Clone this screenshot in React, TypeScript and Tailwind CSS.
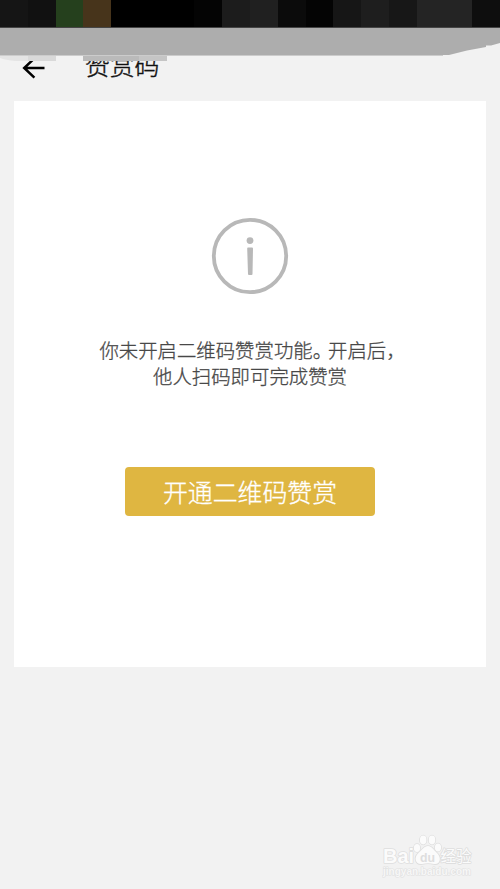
import React from 'react';

const mosaic = [
  'bg-[#151515]', 'bg-[#111111]', 'bg-[#25401d]', 'bg-[#47341b]', 'bg-black', 'bg-black',
  'bg-black', 'bg-[#040404]', 'bg-[#1c1c1c]', 'bg-[#202020]', 'bg-[#0b0b0b]', 'bg-[#040404]',
  'bg-[#161616]', 'bg-[#1e1e1e]', 'bg-[#171717]', 'bg-[#242424]', 'bg-[#242424]', 'bg-[#0e0e0e]',
];

function StatusBar() {
  return (
    <div className="relative z-10 h-[61px] w-full">
      <div className="flex h-7 border-b border-[#454545]">
        {mosaic.map((color, i) => (
          <div key={i} className={`flex-1 ${color}`} />
        ))}
      </div>
      {/* Smudged strip with the torn right corner */}
      <svg className="block" width="500" height="33" viewBox="0 0 500 33">
        <path d="M0 27H500V33H0Z" fill="#f2f2f2" />
        <path d="M0 28H56V33H16Q5 32 0 30Z" fill="#e4e4e4" />
        <path d="M28 28H56V33H28Z" fill="#d9d9d9" />
        <path d="M83 28H139V33H83Z" fill="#bababa" />
        <path d="M139 28H167V33H139Z" fill="#c5c5c5" />
        <path d="M0 27H443V28H0Z" fill="#cccccc" />
        <path d="M0 0H500V15L491 17.5H486V19L467 22.5L449 27H0Z" fill="#adadad" />
      </svg>
    </div>
  );
}

function Header() {
  return (
    <header className="-mt-[8px] flex h-12 items-start pl-[22px]">
      <svg className="mt-[3px]" width="24" height="24" viewBox="0 0 24 24" fill="none" stroke="#000" strokeWidth="2.5">
        <path d="M11.8 2.8L2.2 12L12.4 21.6M1.5 12H22.5" />
      </svg>
      <h1 className="-mt-[7px] ml-[39px] text-[24.8px] font-light leading-9 text-[#111] [-webkit-text-stroke:0.4px_#111]">
        赞赏码
      </h1>
    </header>
  );
}

function InfoIcon() {
  return (
    <svg width="78" height="78" viewBox="0 0 78 78" fill="none">
      <circle cx="39" cy="39" r="36.2" stroke="#b8b8b8" strokeWidth="3.8" />
      <circle cx="39" cy="23.6" r="3.4" fill="#b8b8b8" />
      <path d="M37 30.5H41Q42 30.5 42 31.5L41.5 57Q41.5 58 40.5 58H38Q37 58 37 57L36.2 31.5Q36.2 30.5 37 30.5Z" fill="#b8b8b8" />
    </svg>
  );
}

function Watermark() {
  return (
    <svg
      className="absolute left-[382px] top-[832px]"
      width="94"
      height="48"
      viewBox="0 0 94 48"
      fill="#fbfbfb"
      stroke="#dedede"
      strokeWidth="1.6"
      paintOrder="stroke"
      strokeLinejoin="round"
    >
      <text x="1" y="31" fontFamily="Liberation Sans, sans-serif" fontWeight="700" fontSize="20.5" textLength="31" lengthAdjust="spacingAndGlyphs">Bai</text>
      <ellipse cx="35" cy="16" rx="3.1" ry="3.9" />
      <ellipse cx="41.2" cy="8" rx="3.3" ry="4.4" />
      <ellipse cx="50" cy="8" rx="3.3" ry="4.4" />
      <ellipse cx="56" cy="15.5" rx="3.1" ry="3.9" />
      <path d="M46 14C42 14 40 18 36.5 21C31 26 34 33 40 32C44 31 48 31 52 32C58 33 60 26 55 21C51.5 18 50 14 46 14Z" />
      <text x="38" y="29.5" fontFamily="Liberation Sans, sans-serif" fontWeight="700" fontSize="13" fill="#dedede" stroke="none" textLength="15" lengthAdjust="spacingAndGlyphs">du</text>
      <text x="58.5" y="30" fontFamily="Noto Sans CJK SC, sans-serif" fontWeight="400" fontSize="15.5">经验</text>
      <text x="1" y="43" fontFamily="Liberation Sans, sans-serif" fontWeight="700" fontSize="10.5" fill="#f7f7f7" stroke="#e0e0e0" strokeWidth="1.2" textLength="88" lengthAdjust="spacingAndGlyphs">jingyan.baidu.com</text>
    </svg>
  );
}

export default function App() {
  return (
    <div
      lang="zh-CN"
      className="relative h-[889px] w-[500px] overflow-hidden bg-[#f2f2f2] font-['Noto_Sans_CJK_SC',sans-serif]"
    >
      <StatusBar />
      <Header />
      <main className="mx-3.5 flex h-[566px] flex-col items-center bg-white pt-[116px]">
        <InfoIcon />
        <div className="mt-[42px] whitespace-nowrap text-center text-[19.4px] font-light leading-[26px] text-[#484848] [-webkit-text-stroke:0.3px_#484848]">
          <p className="flex justify-center pl-[5px]">
            <span>你未开启二维码赞赏功能</span>
            <span className="tracking-[-4px]">。</span>
            <span>开启后，</span>
          </p>
          <p>他人扫码即可完成赞赏</p>
        </div>
        <button className="mt-[78px] h-[49px] w-[250px] rounded bg-[#dfb641] text-[24.9px] font-light leading-[49px] text-white [-webkit-text-stroke:0.3px_white]">
          开通二维码赞赏
        </button>
      </main>
      <Watermark />
    </div>
  );
}
